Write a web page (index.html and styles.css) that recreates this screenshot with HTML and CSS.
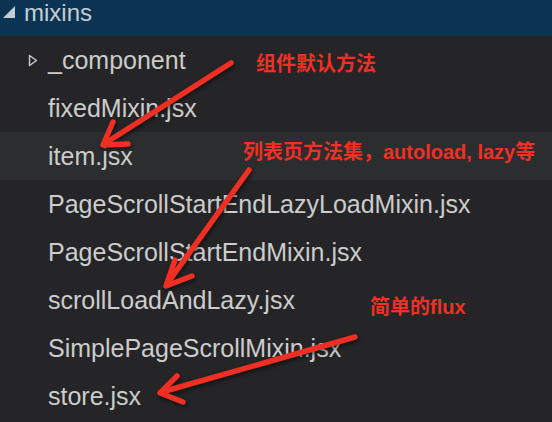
FILE: index.html
```html
<!DOCTYPE html>
<html lang="zh">
<head>
<meta charset="utf-8">
<title>mixins</title>
<link rel="stylesheet" href="styles.css">
</head>
<body>
<div class="tree">
  <div class="folder-head">
    <svg class="caret-open" width="14" height="14" viewBox="0 0 14 14"><path d="M13 1 L13 13 L1 13 Z" fill="#c5ccd3"/></svg>
    <span class="folder-name">mixins</span>
  </div>
  <div class="row folder"><svg class="caret-closed" width="10" height="13" viewBox="0 0 10 13"><path d="M1.5 1.5 L8.5 6.5 L1.5 11.5 Z" fill="none" stroke="#cccccc" stroke-width="1.4" stroke-linejoin="round"/></svg><span>_component</span></div>
  <div class="row">fixedMixin.jsx</div>
  <div class="row hover">item.jsx</div>
  <div class="row">PageScrollStartEndLazyLoadMixin.jsx</div>
  <div class="row">PageScrollStartEndMixin.jsx</div>
  <div class="row">scrollLoadAndLazy.jsx</div>
  <div class="row">SimplePageScrollMixin.jsx</div>
  <div class="row">store.jsx</div>

  <svg class="arrows" width="552" height="422" viewBox="0 0 552 422">
    <g fill="none" stroke="#ef2f24" stroke-width="5.5" stroke-linecap="round" stroke-linejoin="round">
      <path d="M231 63 L104 144"/>
      <path d="M113 122 L103 145 L128 144"/>
      <path d="M249 170 L167 284"/>
      <path d="M175 260 L166 286 L192 276"/>
      <path d="M355 337 L162 392"/>
      <path d="M177 376 L160 393 L183 402"/>
    </g>
  </svg>
  <div class="note note-1">组件默认方法</div>
  <div class="note note-2">列表页方法集，autoload, lazy等</div>
  <div class="note note-3">简单的flux</div>
</div>
</body>
</html>
```
FILE: styles.css
```css
html, body {
  margin: 0;
  padding: 0;
  background: #252527;
}
.tree {
  position: relative;
  width: 552px;
  height: 422px;
  overflow: hidden;
  font-family: "Liberation Sans", Arial, sans-serif;
}
.folder-head {
  height: 36px;
  background: #0b3452;
  display: flex;
  align-items: flex-start;
  padding-top: 1px;
  box-sizing: border-box;
}
.caret-open {
  margin: 4px 0 0 2px;
}
.folder-name {
  margin-left: 8px;
  font-size: 24px;
  line-height: 24px;
  color: #c6cdd4;
}
.row {
  height: 48px;
  line-height: 48px;
  font-size: 25px;
  color: #cccccc;
  padding-left: 48px;
  white-space: nowrap;
}
.row.folder {
  padding-left: 28px;
  display: flex;
  align-items: center;
}
.row.folder span {
  margin-left: 10px;
}
.caret-closed {
  margin-top: 1px;
}
.row.hover {
  background: #2b2d2f;
}
.arrows {
  position: absolute;
  left: 0;
  top: 0;
  filter: drop-shadow(1px 2px 2px rgba(0, 0, 0, 0.55));
}
.note {
  position: absolute;
  font-family: "Liberation Sans", "Noto Sans CJK SC", sans-serif;
  font-weight: bold;
  font-size: 20px;
  line-height: 20px;
  color: #ef3024;
  white-space: nowrap;
}
.note-1 { left: 256px; top: 54px; }
.note-2 { left: 243px; top: 142px; }
.note-3 { left: 370px; top: 297px; }
```
